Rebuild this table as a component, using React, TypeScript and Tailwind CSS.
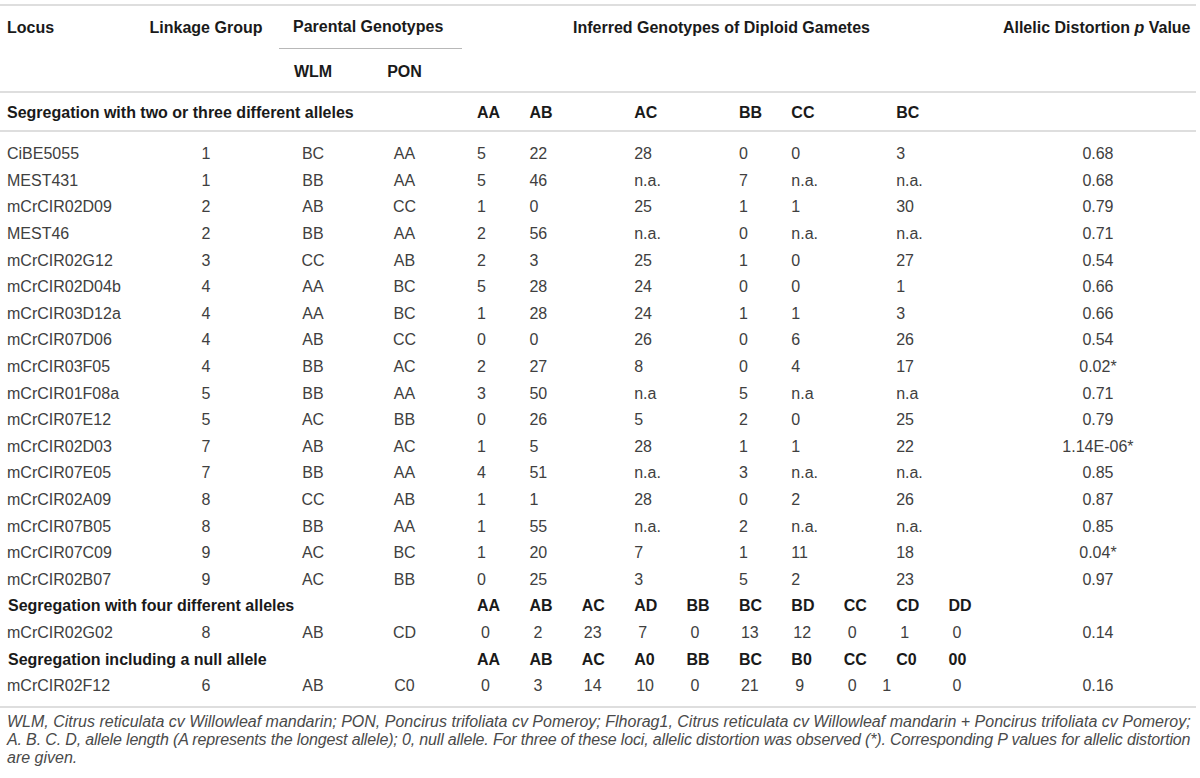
type Cell = { v: string; pad?: string };

const grid =
  "grid grid-cols-[140px_132px_82px_101px_repeat(10,52.4px)_1fr] items-center";

const sec1: (string | null)[][] = [
  ["CiBE5055", "1", "BC", "AA", "5", "22", "28", "0", "0", "3", "0.68"],
  ["MEST431", "1", "BB", "AA", "5", "46", "n.a.", "7", "n.a.", "n.a.", "0.68"],
  ["mCrCIR02D09", "2", "AB", "CC", "1", "0", "25", "1", "1", "30", "0.79"],
  ["MEST46", "2", "BB", "AA", "2", "56", "n.a.", "0", "n.a.", "n.a.", "0.71"],
  ["mCrCIR02G12", "3", "CC", "AB", "2", "3", "25", "1", "0", "27", "0.54"],
  ["mCrCIR02D04b", "4", "AA", "BC", "5", "28", "24", "0", "0", "1", "0.66"],
  ["mCrCIR03D12a", "4", "AA", "BC", "1", "28", "24", "1", "1", "3", "0.66"],
  ["mCrCIR07D06", "4", "AB", "CC", "0", "0", "26", "0", "6", "26", "0.54"],
  ["mCrCIR03F05", "4", "BB", "AC", "2", "27", "8", "0", "4", "17", "0.02*"],
  ["mCrCIR01F08a", "5", "BB", "AA", "3", "50", "n.a", "5", "n.a", "n.a", "0.71"],
  ["mCrCIR07E12", "5", "AC", "BB", "0", "26", "5", "2", "0", "25", "0.79"],
  ["mCrCIR02D03", "7", "AB", "AC", "1", "5", "28", "1", "1", "22", "1.14E-06*"],
  ["mCrCIR07E05", "7", "BB", "AA", "4", "51", "n.a.", "3", "n.a.", "n.a.", "0.85"],
  ["mCrCIR02A09", "8", "CC", "AB", "1", "1", "28", "0", "2", "26", "0.87"],
  ["mCrCIR07B05", "8", "BB", "AA", "1", "55", "n.a.", "2", "n.a.", "n.a.", "0.85"],
  ["mCrCIR07C09", "9", "AC", "BC", "1", "20", "7", "1", "11", "18", "0.04*"],
  ["mCrCIR02B07", "9", "AC", "BB", "0", "25", "3", "5", "2", "23", "0.97"],
];

// which of the 10 gamete columns the 6 values of section 1 sit in
const sec1Slots = [0, 1, 3, 5, 6, 8];

function Head({ children }: { children: React.ReactNode }) {
  return <div className="pl-[22px] font-bold text-[#1a1a1a]">{children}</div>;
}

function DataRow({
  locus,
  lg,
  wlm,
  pon,
  cells,
  p,
}: {
  locus: string;
  lg: string;
  wlm: string;
  pon: string;
  cells: Cell[];
  p: string;
}) {
  return (
    <div className={`${grid} h-[26.6px] text-[#404040]`}>
      <div className="pl-[7px]">{locus}</div>
      <div className="text-center">{lg}</div>
      <div className="text-center">{wlm}</div>
      <div className="text-center">{pon}</div>
      {cells.map((c, i) => (
        <div key={i} className={c.pad ?? "pl-[22px]"}>
          {c.v}
        </div>
      ))}
      <div className="text-center pl-[21px]">{p}</div>
    </div>
  );
}

function SectionRow({ title, heads }: { title: string; heads: string[] }) {
  return (
    <div className={`${grid} h-[26.6px]`}>
      <div className="col-span-4 pl-[8px] font-bold text-[#1a1a1a]">{title}</div>
      {heads.map((h) => (
        <Head key={h}>{h}</Head>
      ))}
      <div />
    </div>
  );
}

function spread(vals: string[]): Cell[] {
  return vals.map((v) => ({ v, pad: v.length > 1 ? "pl-[24px]" : "pl-[26px]" }));
}

export default function App() {
  const nullCells = spread(["0", "3", "14", "10", "0", "21", "9", "0", "1", "0"]);
  nullCells[8] = { v: "1", pad: "pl-[8px]" };

  return (
    <div className="min-h-screen overflow-hidden bg-white font-['Liberation_Sans',Arial,sans-serif] text-[16px]">
      <div className="w-[1196px] pt-[4px]">
        {/* header */}
        <div className="border-t-2 border-[#dedede]">
          <div className={`${grid} h-[43px]`}>
            <div className="pl-[7px] font-bold text-[#1a1a1a]">Locus</div>
            <div className="text-center font-bold text-[#1a1a1a]">Linkage Group</div>
            <div className="col-span-2 self-stretch flex items-center ml-[7px] mr-[-7px] pl-[14px] border-b border-[#b8b8b8] font-bold text-[#1a1a1a]">
              Parental Genotypes
            </div>
            <div className="col-span-10 pl-[118px] font-bold text-[#1a1a1a]">
              Inferred Genotypes of Diploid Gametes
            </div>
            <div className="pl-[24px] font-bold text-[#1a1a1a] whitespace-nowrap">
              Allelic Distortion <span className="italic">p</span> Value
            </div>
          </div>
          <div className={`${grid} h-[44px] pt-[4px] border-b-2 border-[#dedede]`}>
            <div />
            <div />
            <div className="text-center font-bold text-[#1a1a1a]">WLM</div>
            <div className="text-center font-bold text-[#1a1a1a]">PON</div>
          </div>
        </div>

        <div className={`${grid} h-[39px] pt-[2px] border-b-2 border-[#dedede]`}>
          <div className="col-span-4 pl-[7px] font-bold text-[#1a1a1a] whitespace-nowrap">
            Segregation with two or three different alleles
          </div>
          {["AA", "AB", "", "AC", "", "BB", "CC", "", "BC", ""].map((h, i) => (
            <Head key={i}>{h}</Head>
          ))}
          <div />
        </div>

        <div className="pt-[9px] pb-[7px] border-b-2 border-[#dedede]">
          {sec1.map((r) => {
            const cells: Cell[] = Array.from({ length: 10 }, () => ({ v: "" }));
            sec1Slots.forEach((slot, k) => {
              cells[slot] = { v: r[4 + k] ?? "" };
            });
            return (
              <DataRow
                key={r[0]}
                locus={r[0]!}
                lg={r[1]!}
                wlm={r[2]!}
                pon={r[3]!}
                cells={cells}
                p={r[10]!}
              />
            );
          })}

          <SectionRow
            title="Segregation with four different alleles"
            heads={["AA", "AB", "AC", "AD", "BB", "BC", "BD", "CC", "CD", "DD"]}
          />
          <DataRow
            locus="mCrCIR02G02"
            lg="8"
            wlm="AB"
            pon="CD"
            cells={spread(["0", "2", "23", "7", "0", "13", "12", "0", "1", "0"])}
            p="0.14"
          />
          <SectionRow
            title="Segregation including a null allele"
            heads={["AA", "AB", "AC", "A0", "BB", "BC", "B0", "CC", "C0", "00"]}
          />
          <DataRow
            locus="mCrCIR02F12"
            lg="6"
            wlm="AB"
            pon="C0"
            cells={nullCells}
            p="0.16"
          />
        </div>

        <p className="pt-[5px] px-[7px] text-[16px] leading-[18px] italic text-[#4a4a4a] whitespace-nowrap">
          WLM, Citrus reticulata cv Willowleaf mandarin; PON, Poncirus trifoliata cv Pomeroy; Flhorag1, Citrus reticulata cv Willowleaf mandarin + Poncirus trifoliata cv Pomeroy;
          <br />
          <span className="tracking-[-0.15px]">
            A. B. C. D, allele length (A represents the longest allele); 0, null allele. For three of these loci, allelic distortion was observed (*). Corresponding P values for allelic distortion
          </span>
          <br />
          are given.
        </p>
      </div>
    </div>
  );
}
